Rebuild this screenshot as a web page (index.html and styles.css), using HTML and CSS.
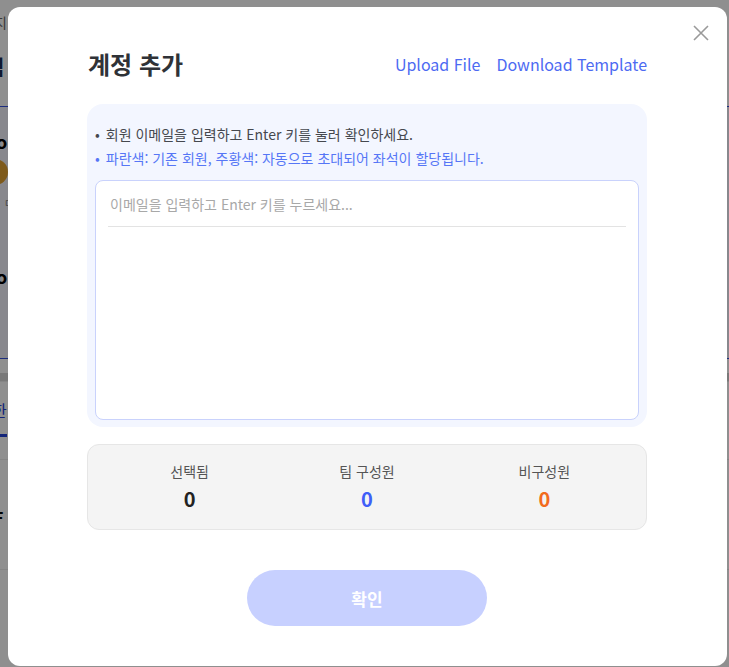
FILE: index.html
```html
<!DOCTYPE html>
<html lang="ko">
<head>
  <meta charset="UTF-8">
  <meta name="viewport" content="width=device-width, initial-scale=1.0">
  <title>계정 추가</title>
  <link rel="stylesheet" href="styles.css">
</head>
<body>
  <!-- page behind the dialog -->
  <div class="page">
    <div class="page-top">
      <p class="crumb">지</p>
      <p class="page-title">팀</p>
    </div>
    <div class="page-card">
      <p class="bold">o</p>
      <span class="avatar"></span>
      <p class="small">ㄷ</p>
      <p class="bold low">o</p>
    </div>
    <div class="page-bar"></div>
    <div class="page-tabs">
      <span class="tab">한</span>
    </div>
    <div class="page-row"><b>F</b></div>
    <div class="page-row"></div>
  </div>

  <div class="overlay"></div>

  <div class="modal">
    <button class="close" aria-label="닫기">
      <svg width="16" height="16" viewBox="0 0 16 16"><path d="M1 1L15 15M15 1L1 15" stroke="#9a9a9a" stroke-width="1.6" fill="none"/></svg>
    </button>

    <div class="modal-head">
      <h2>계정 추가</h2>
      <div class="links">
        <a href="#">Upload File</a>
        <a href="#">Download Template</a>
      </div>
    </div>

    <div class="panel">
      <ul class="tips">
        <li>회원 이메일을 입력하고 Enter 키를 눌러 확인하세요.</li>
        <li class="blue">파란색: 기존 회원, 주황색: 자동으로 초대되어 좌석이 할당됩니다.</li>
      </ul>
      <div class="box">
        <input class="email" type="text" placeholder="이메일을 입력하고 Enter 키를 누르세요..." autofocus>
      </div>
    </div>

    <div class="stats">
      <div class="stat">
        <p class="label">선택됨</p>
        <p class="num">0</p>
      </div>
      <div class="stat">
        <p class="label">팀 구성원</p>
        <p class="num member">0</p>
      </div>
      <div class="stat">
        <p class="label">비구성원</p>
        <p class="num guest">0</p>
      </div>
    </div>

    <div class="foot">
      <button class="ok" disabled>확인</button>
    </div>
  </div>
</body>
</html>
```

FILE: styles.css
```css
*{
  margin: 0;
  padding: 0;
  box-sizing: border-box;
}
body{
  width: 729px;
  height: 667px;
  overflow: hidden;
  font-family: "Noto Sans CJK KR", "Noto Sans", sans-serif;
  background: #fff;
  position: relative;
}

/* page behind */
.page{
  width: 729px;
}
.page-top{
  height: 106px;
  padding-top: 12px;
}
.crumb{
  font-size: 14px;
  color: #666;
  margin-left: -6px;
  line-height: 20px;
}
.page-title{
  font-size: 20px;
  font-weight: 700;
  color: #1a2a55;
  margin: 20px 0 0 -14px;
}
.page-card{
  height: 253px;
  background: #f3f3fb;
  border-top: 1px solid #3550e0;
  border-bottom: 1px solid #3550e0;
  padding-top: 24px;
}
.bold{
  font-size: 18px;
  font-weight: 700;
  color: #000;
  margin-left: -4px;
  line-height: 20px;
}
.low{
  margin-top: 56px;
}
.avatar{
  display: block;
  width: 26px;
  height: 26px;
  border-radius: 50%;
  background: #e0a030;
  margin: 8px 0 0 -18px;
}
.small{
  font-size: 10px;
  color: #777;
  margin: 10px 0 0 4px;
}
.page-bar{
  height: 22px;
  border-bottom: 8px solid #d8d8d8;
}
.page-tabs{
  height: 79px;
  border-top: 1px solid #eee;
  border-bottom: 1px solid #eee;
  padding-top: 16px;
}
.tab{
  display: inline-block;
  font-size: 16px;
  color: #2340d8;
  margin-left: -8px;
  padding-bottom: 12px;
  border-bottom: 3px solid #2340d8;
}
.page-row{
  height: 110px;
  border-bottom: 1px solid #eee;
  padding-top: 45px;
  font-size: 16px;
  margin-left: -6px;
}

.overlay{
  position: absolute;
  inset: 0;
  background: rgba(0, 0, 0, 0.44);
}

/* dialog */
.modal{
  position: absolute;
  left: 8px;
  top: 7px;
  width: 719px;
  height: 659px;
  background: #fff;
  border-radius: 12px;
  padding: 41px 80px 0 79px;
}
.close{
  position: absolute;
  top: 18px;
  right: 18px;
  width: 16px;
  height: 16px;
  border: 0;
  background: none;
  display: flex;
}
.modal-head{
  display: flex;
  justify-content: space-between;
  align-items: center;
  height: 32px;
}
.modal-head h2{
  font-size: 24px;
  line-height: 32px;
  font-weight: 700;
  color: #2f3237;
  padding-left: 1px;
}
.links{
  display: flex;
  gap: 16px;
}
.links a{
  font-size: 16px;
  color: #4d6af2;
  text-decoration: none;
}

.panel{
  margin-top: 24px;
  background: #f3f6ff;
  border-radius: 16px;
  padding: 18px 8px 7px;
}
.tips{
  list-style: none;
}
.tips li{
  font-size: 14px;
  line-height: 24px;
  color: #45484e;
  display: flex;
  gap: 6px;
  padding-left: 0;
}
.tips li::before{
  content: "•";
}
.tips li.blue{
  color: #5676f6;
}
.box{
  margin-top: 10px;
  height: 240px;
  background: #fff;
  border: 1px solid #c9d2fc;
  border-radius: 8px;
  padding: 12px;
}
.email{
  display: block;
  width: 100%;
  border: 0;
  border-bottom: 1px solid #e3e3e3;
  outline: none;
  font-family: inherit;
  font-size: 14px;
  line-height: 22px;
  padding: 0 0 11px 2px;
  color: #333;
  background: transparent;
  caret-color: #333;
}
.email::placeholder{
  color: #a8a8a8;
}

.stats{
  margin-top: 17px;
  display: grid;
  grid-template-columns: 1fr 1fr 1fr;
  background: #f4f4f4;
  border: 1px solid #e6e6e6;
  border-radius: 12px;
  padding: 14px 13px 16px;
  text-align: center;
}
.label{
  font-size: 14px;
  line-height: 24px;
  color: #555;
}
.num{
  margin-top: 2px;
  font-size: 20px;
  line-height: 28px;
  font-weight: 700;
  color: #222;
}
.num.member{
  color: #3f5ef8;
}
.num.guest{
  color: #f26b1d;
}

.foot{
  margin-top: 40px;
  display: flex;
  justify-content: center;
}
.ok{
  width: 240px;
  height: 56px;
  border: 0;
  border-radius: 28px;
  background: #c7d0ff;
  color: #fff;
  font-family: inherit;
  font-size: 17px;
  font-weight: 700;
}
```
